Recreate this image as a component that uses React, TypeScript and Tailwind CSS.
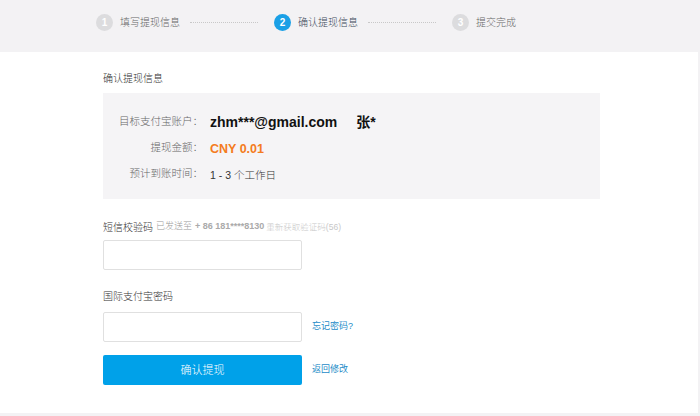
import { useState } from "react";

const font = { fontFamily: '"Liberation Sans", "Noto Sans CJK SC", sans-serif' };

type Step = { no: number; label: string; state: "done" | "active" | "todo" };

const steps: Step[] = [
  { no: 1, label: "填写提现信息", state: "done" },
  { no: 2, label: "确认提现信息", state: "active" },
  { no: 3, label: "提交完成", state: "todo" },
];

function StepItem({ step }: { step: Step }) {
  const active = step.state === "active";
  return (
    <div className="flex items-center">
      <span
        className={
          active
            ? "flex h-[17px] w-[17px] items-center justify-center rounded-full bg-[#1aa0e6] text-[10px] font-bold text-white"
            : "flex h-[17px] w-[17px] items-center justify-center rounded-full bg-[#dcdcde] text-[10px] font-bold text-white"
        }
      >
        {step.no}
      </span>
      <span
        className={
          active
            ? "ml-[7px] text-[10px] font-light text-[#3d4a5a]"
            : "ml-[7px] text-[10px] font-light text-[#666]"
        }
      >
        {step.label}
      </span>
    </div>
  );
}

function Dots() {
  return <div className="mx-[10px] w-[68px] border-t border-dotted border-[#c8c8c8]" />;
}

function InfoRow({ label, children, h }: { label: string; children: React.ReactNode; h: string }) {
  return (
    <div className={`flex items-center ${h}`}>
      <div className="w-[100px] text-right text-[10.5px] font-light text-[#666]">{label}</div>
      <div className="ml-[7px]">{children}</div>
    </div>
  );
}

export default function App() {
  const [code, setCode] = useState("");
  const [pwd, setPwd] = useState("");

  return (
    <div className="h-[416px] w-[700px] overflow-hidden bg-[#f3f2f4]" style={font}>
      {/* steps */}
      <div className="flex h-[52px] items-start pl-[96px] pt-[14px]">
        <StepItem step={steps[0]} />
        <div className="flex h-[17px] items-center">
          <Dots />
        </div>
        <div className="w-[6px]" />
        <StepItem step={steps[1]} />
        <div className="flex h-[17px] items-center">
          <Dots />
        </div>
        <div className="w-[6px]" />
        <StepItem step={steps[2]} />
      </div>

      <div className="h-[361px] w-[698px] bg-white pl-[103px] pt-[19px]">
        <div className="h-[16px] text-[10px] font-light leading-[16px] text-[#333]">确认提现信息</div>

        <div className="mt-[6px] h-[106px] w-[497px] bg-[#f5f4f6] pt-[16px]">
          <InfoRow label="目标支付宝账户：" h="h-[26px]">
            <span className="text-[14px] font-bold text-[#111]">zhm***@gmail.com</span>
            <span className="ml-[19px] text-[14px] font-bold text-[#111]">张*</span>
          </InfoRow>
          <InfoRow label="提现金额：" h="h-[26px]">
            <span className="text-[12.5px] font-bold text-[#f47b20]">CNY 0.01</span>
          </InfoRow>
          <InfoRow label="预计到账时间：" h="h-[25px]">
            <span className="text-[10.5px] font-light text-[#333]">1 - 3 个工作日</span>
          </InfoRow>
        </div>

        <div className="mt-[20px] flex h-[16px] items-center">
          <span className="text-[10px] font-light text-[#333]">短信校验码</span>
          <span className="ml-[3px] text-[9px] font-light text-[#999]">已发送至</span>
          <span className="ml-[3px] text-[9px] font-bold text-[#aaa]">+ 86 181****8130</span>
          <span className="ml-[2px] text-[8.5px] font-light text-[#c8c8c8]">重新获取验证码(56)</span>
        </div>
        <input
          value={code}
          onChange={(e) => setCode(e.target.value)}
          className="mt-[5px] block h-[30px] w-[199px] rounded-[2px] border border-[#e0e0e0] bg-white px-2 text-[12px] outline-none"
        />

        <div className="mt-[19px] h-[16px] text-[10px] font-light leading-[16px] text-[#333]">国际支付宝密码</div>
        <div className="mt-[7px] flex items-center">
          <input
            type="password"
            value={pwd}
            onChange={(e) => setPwd(e.target.value)}
            className="block h-[30px] w-[199px] rounded-[2px] border border-[#e0e0e0] bg-white px-2 text-[12px] outline-none"
          />
          <a className="ml-[10px] cursor-pointer text-[9px] text-[#1e8cc8]">忘记密码?</a>
        </div>

        <div className="mt-[13px] flex items-center">
          <button className="h-[30px] w-[199px] rounded-[2px] bg-[#00a1e9] text-[11px] font-light text-white">
            确认提现
          </button>
          <a className="ml-[10px] cursor-pointer text-[9px] text-[#1e8cc8]">返回修改</a>
        </div>
      </div>
    </div>
  );
}
